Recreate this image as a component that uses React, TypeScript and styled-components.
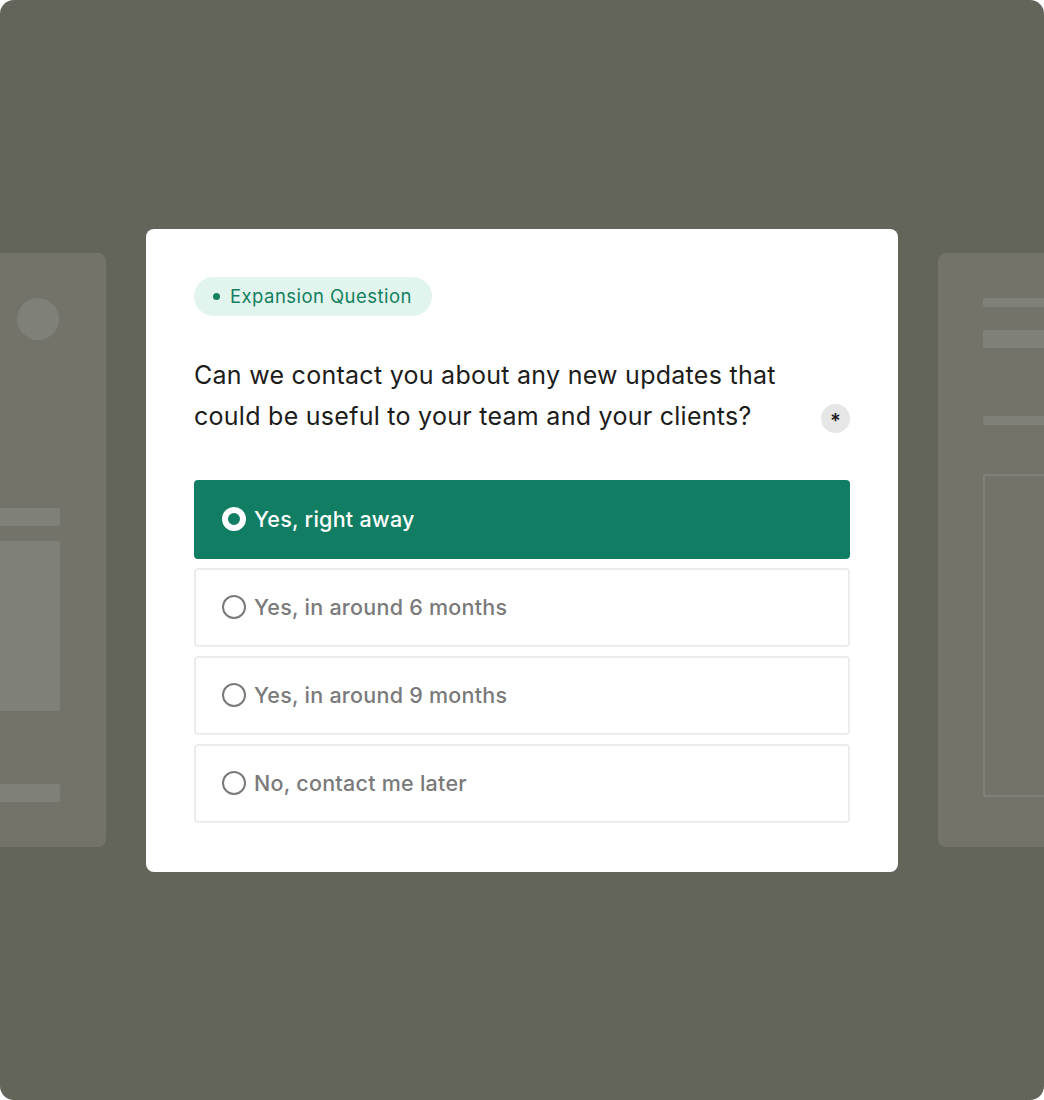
import React, { useState } from 'react';
import styled, { createGlobalStyle } from 'styled-components';

const GlobalStyle = createGlobalStyle`
  html, body {
    margin: 0;
    padding: 0;
    background: #ffffff;
  }
  * {
    box-sizing: border-box;
  }
`;

const options = [
  'Yes, right away',
  'Yes, in around 6 months',
  'Yes, in around 9 months',
  'No, contact me later',
];

const App: React.FC = () => {
  const [selected, setSelected] = useState(0);

  return (
    <>
      <GlobalStyle />
      <Frame>
        <SidePanel>
          <LeftContent>
            <Avatar />
            <LeftBars>
              <GhostBar />
              <GhostBlock />
            </LeftBars>
            <GhostBar />
          </LeftContent>
        </SidePanel>

        <Modal>
          <Tag>
            <TagDot />
            Expansion Question
          </Tag>
          <QuestionRow>
            <Question>
              Can we contact you about any new updates that could be useful to
              your team and your clients?
            </Question>
            <Required>*</Required>
          </QuestionRow>
          <OptionList>
            {options.map((label, i) => (
              <Option
                key={label}
                $active={selected === i}
                onClick={() => setSelected(i)}
              >
                <Radio $active={selected === i} />
                {label}
              </Option>
            ))}
          </OptionList>
        </Modal>

        <SidePanel>
          <RightContent>
            <ThinLine />
            <ThickLine />
            <ThinLine style={{ marginTop: 68 }} />
            <OutlineBox />
          </RightContent>
        </SidePanel>
      </Frame>
    </>
  );
};

export default App;

const Frame = styled.div`
  width: 1044px;
  height: 1100px;
  background-color: #63645a;
  border-radius: 14px;
  overflow: hidden;
  display: flex;
  flex-direction: row;
  align-items: center;
  justify-content: center;
  gap: 40px;
  font-family: Inter, 'Open Sans', sans-serif;
`;

const SidePanel = styled.div`
  flex: 0 0 240px;
  height: 594px;
  background-color: #73736a;
  border-radius: 8px;
  display: flex;
  flex-direction: column;
`;

const LeftContent = styled.div`
  height: 100%;
  padding: 45px 46px 45px 0;
  display: flex;
  flex-direction: column;
  align-items: flex-end;
`;

const Avatar = styled.div`
  width: 42px;
  height: 42px;
  border-radius: 50%;
  background-color: #7f8077;
  margin-right: 1px;
`;

const LeftBars = styled.div`
  width: 100%;
  margin-top: 168px;
  display: flex;
  flex-direction: column;
  gap: 15px;
  flex: 1;
`;

const GhostBar = styled.div`
  width: 100%;
  height: 18px;
  border-radius: 2px;
  background-color: #7f8077;
`;

const GhostBlock = styled.div`
  width: 100%;
  height: 170px;
  border-radius: 2px;
  background-color: #7f8077;
`;

const RightContent = styled.div`
  height: 100%;
  padding: 45px 0 50px 45px;
  display: flex;
  flex-direction: column;
`;

const ThinLine = styled.div`
  width: 100%;
  height: 9px;
  border-radius: 2px;
  background-color: #7f8077;
`;

const ThickLine = styled.div`
  width: 100%;
  height: 18px;
  margin-top: 23px;
  border-radius: 2px;
  background-color: #7f8077;
`;

const OutlineBox = styled.div`
  width: 100%;
  flex: 1;
  margin-top: 49px;
  border: 2px solid #7f8077;
  border-radius: 2px;
`;

const Modal = styled.div`
  flex: 0 0 752px;
  background-color: #ffffff;
  border-radius: 8px;
  padding: 48px 48px 49px;
  display: flex;
  flex-direction: column;
`;

const Tag = styled.div`
  align-self: flex-start;
  height: 39px;
  padding: 0 20px 0 19px;
  border-radius: 20px;
  background-color: #e2f4ee;
  color: #14805f;
  font-size: 18.5px;
  letter-spacing: 0.45px;
  display: flex;
  align-items: center;
  gap: 10px;
`;

const TagDot = styled.span`
  width: 7px;
  height: 7px;
  border-radius: 50%;
  background-color: #14805f;
`;

const QuestionRow = styled.div`
  margin-top: 39px;
  display: flex;
  flex-direction: row;
  align-items: flex-end;
  justify-content: space-between;
`;

const Question = styled.div`
  width: 610px;
  font-size: 25px;
  line-height: 41px;
  color: #1c1c1a;
  letter-spacing: 0.27px;
`;

const Required = styled.div`
  width: 29px;
  height: 29px;
  margin-bottom: 4px;
  border-radius: 50%;
  background-color: #e6e6e6;
  color: #1c1c1a;
  font-size: 20px;
  font-weight: 600;
  display: flex;
  align-items: center;
  justify-content: center;
  padding-top: 6px;
`;

const OptionList = styled.div`
  margin-top: 43px;
  display: flex;
  flex-direction: column;
  gap: 9px;
`;

const Option = styled.div<{ $active: boolean }>`
  height: 79px;
  padding: 0 26px;
  border-radius: 4px;
  border: 2px solid ${(p) => (p.$active ? '#117e63' : '#ececec')};
  background-color: ${(p) => (p.$active ? '#117e63' : '#ffffff')};
  color: ${(p) => (p.$active ? '#ffffff' : '#7a7a7a')};
  font-size: 21.5px;
  font-weight: 500;
  letter-spacing: 0.25px;
  display: flex;
  align-items: center;
  gap: 8px;
  cursor: pointer;
`;

const Radio = styled.span<{ $active: boolean }>`
  width: 24px;
  height: 24px;
  border-radius: 50%;
  flex-shrink: 0;
  border: ${(p) => (p.$active ? '6px solid #ffffff' : '2px solid #7a7a7a')};
  background-color: ${(p) => (p.$active ? '#117e63' : 'transparent')};
`;
